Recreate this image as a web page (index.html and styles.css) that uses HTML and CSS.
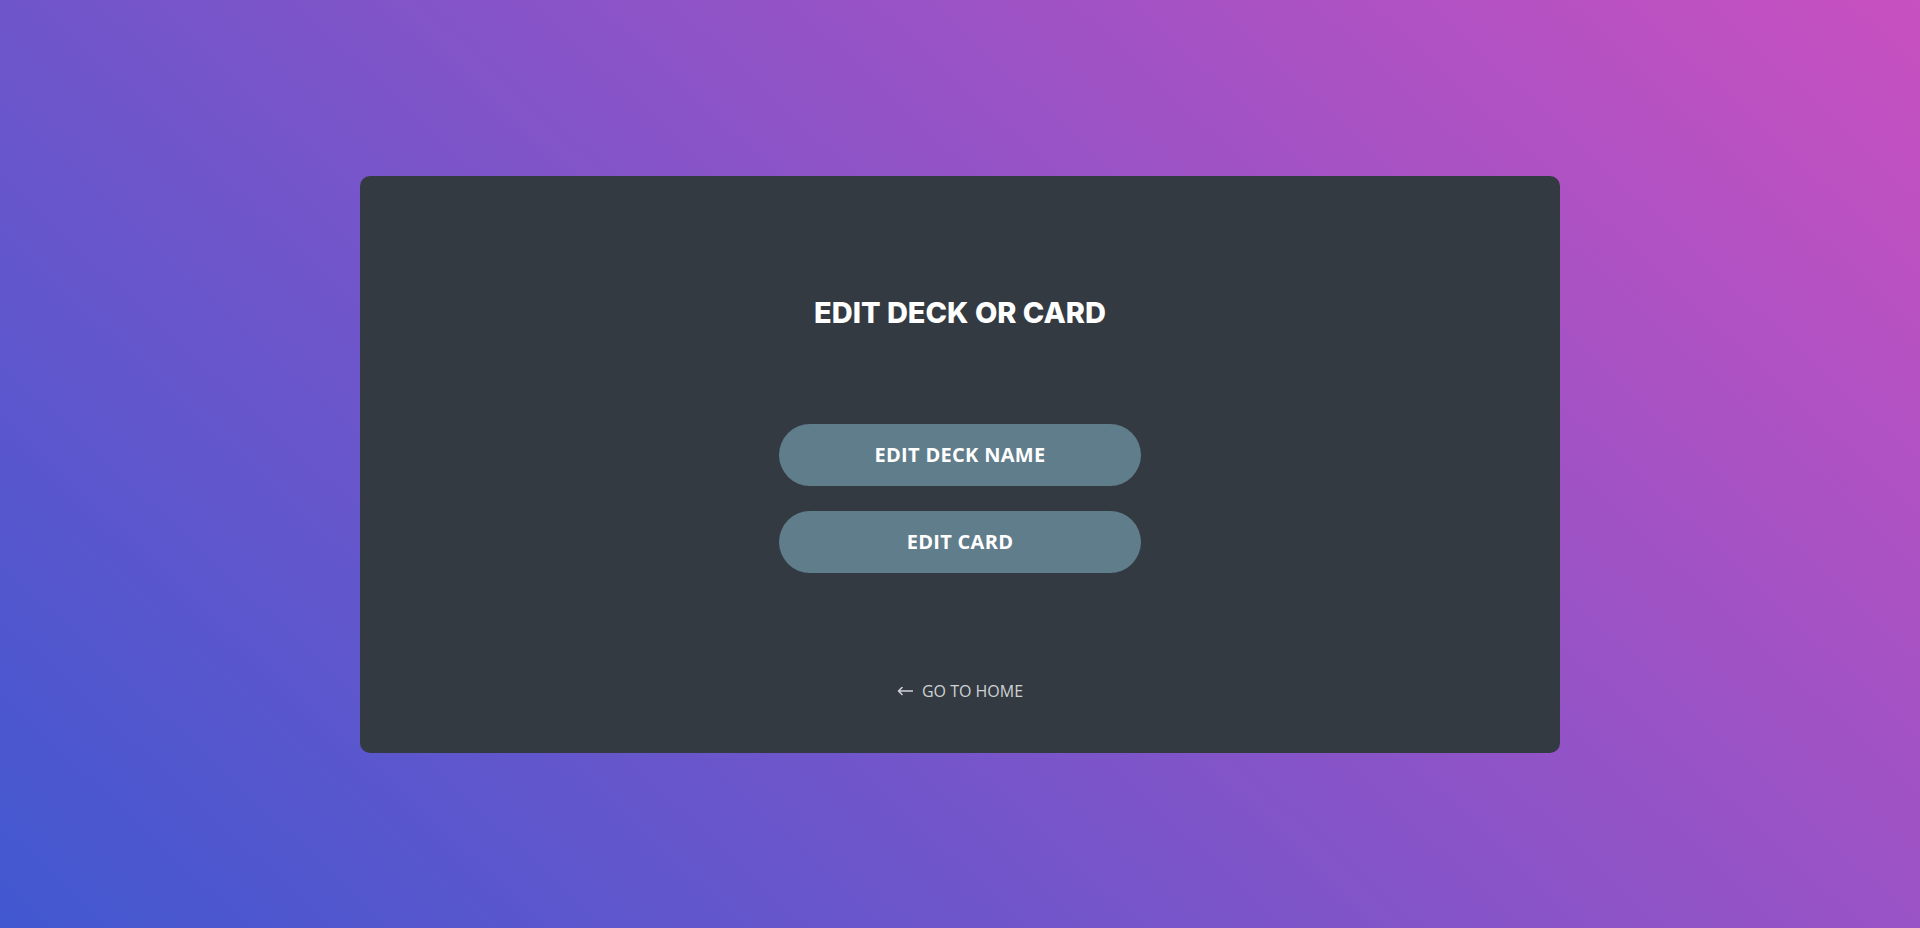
FILE: index.html
```html
<!DOCTYPE html>
<html lang="en">
<head>
<meta charset="utf-8">
<title>Edit Deck or Card</title>
<link rel="stylesheet" href="styles.css">
</head>
<body>
<main class="page">
  <section class="panel">
    <h1 class="title">EDIT DECK OR CARD</h1>
    <div class="actions">
      <button class="pill">EDIT DECK NAME</button>
      <button class="pill">EDIT CARD</button>
    </div>
    <a class="home-link" href="#">
      <svg class="arrow" width="16" height="10" viewBox="0 0 16 10" aria-hidden="true">
        <path d="M1.5 5H15.5M5 1.5L1.5 5L5 8.5" fill="none" stroke="currentColor" stroke-width="1.6" stroke-linecap="round" stroke-linejoin="round"/>
      </svg>
      <span>GO TO HOME</span>
    </a>
  </section>
</main>
</body>
</html>
```
FILE: styles.css
```css
* { box-sizing: border-box; }
html, body { margin: 0; height: 100%; }
body {
  background: linear-gradient(43deg, #4158D0 0%, #C850C0 100%);
  font-family: "Open Sans", "Liberation Sans", sans-serif;
}
.page {
  height: 928px;
  display: flex;
  align-items: center;
  justify-content: center;
}
.panel {
  width: 1200px;
  height: 577px;
  background: #343a41;
  border-radius: 10px;
  display: flex;
  flex-direction: column;
  align-items: center;
  padding-top: 120px;
}
.title {
  margin: 0;
  font-family: Inter, "Noto Sans", sans-serif;
  font-weight: 800;
  font-size: 29px;
  line-height: 34px;
  letter-spacing: 0;
  color: #ffffff;
}
.actions {
  margin-top: 94px;
  display: flex;
  flex-direction: column;
  gap: 25px;
}
.pill {
  width: 362px;
  height: 62px;
  border: none;
  border-radius: 31px;
  background: #607d8b;
  color: #ffffff;
  font-family: "Open Sans", "Liberation Sans", sans-serif;
  font-weight: 700;
  font-size: 20px;
  letter-spacing: 0.3px;
  cursor: pointer;
}
.home-link {
  margin-top: 106px;
  display: flex;
  align-items: center;
  gap: 9px;
  color: #cfd2d6;
  text-decoration: none;
  font-family: "Open Sans", "Liberation Sans", sans-serif;
  font-size: 16px;
  line-height: 24px;
}
.arrow { display: block; }
```
